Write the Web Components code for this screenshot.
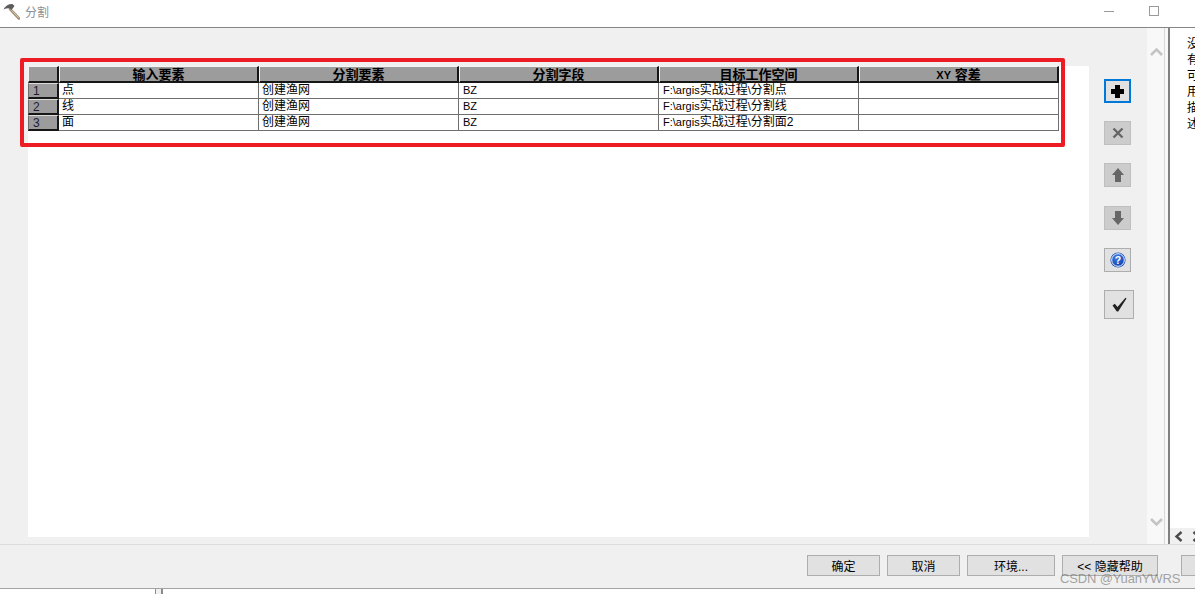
<!DOCTYPE html>
<html lang="zh">
<head>
<meta charset="utf-8">
<title>分割</title>
<style>
  html, body { margin: 0; padding: 0; background: #fff; }
  body { font: 12px "Liberation Sans", "Noto Sans CJK SC", sans-serif; color: #000; }
</style>
</head>
<body>
<split-dialog></split-dialog>

<script>
const FONT = `"Liberation Sans", "Noto Sans CJK SC", sans-serif`;

class TitleBar extends HTMLElement {
  constructor() {
    super();
    this.attachShadow({ mode: "open" }).innerHTML = `
    <style>
      :host {
        display: flex;
        align-items: center;
        height: 22px;
        padding-bottom: 5px;
        flex: none;
        background: #fff;
        border-bottom: 1px solid #868686;
        font: 12px ${FONT};
        overflow: hidden;
      }
      svg.app { margin-left: 3px; flex: none; }
      .title { margin-left: 5px; color: #8b8f93; flex: 1; }
      .min { width: 10px; height: 1px; background: #9a9a9a; margin-right: 35px; }
      .max { width: 8px; height: 8px; border: 1px solid #9a9a9a; margin-right: 36px; }
    </style>
    <svg class="app" width="17" height="20" viewBox="0 0 17 20">
      <path d="M7 8 L16 17.5" stroke="#a08f72" stroke-width="2.6" stroke-linecap="round"/>
      <path d="M7.6 8.2 L15.6 16.8" stroke="#d8d0bd" stroke-width="0.9"/>
      <path d="M0.5 8.5 C2 5 5 3 9.5 3 L11.5 5 L8.5 9 L6.5 7.2 C4.5 7 2.5 7.5 0.5 8.5 Z" fill="#5c5c5c"/>
    </svg>
    <span class="title"><slot></slot></span>
    <span class="min"></span>
    <span class="max"></span>
    `;
  }
}
customElements.define("title-bar", TitleBar);

class DataGrid extends HTMLElement {
  constructor() {
    super();
    this.attachShadow({ mode: "open" });
  }
  set data(data) {
    this._data = data;
    this.render();
  }
  render() {
    const head = ["", ...this._data.columns]
      .map(c => `<div class="hd">${c}</div>`).join("");
    const rows = this._data.rows.map((row, i) => `
      <div class="hd num">${i + 1}</div>
      ${row.map(c => `<div class="cell">${c}</div>`).join("")}
    `).join("");
    this.shadowRoot.innerHTML = `
    <style>
      :host {
        display: grid;
        grid-template-columns: 31px repeat(5, 200px);
        grid-template-rows: 17px repeat(3, 16px);
        width: 1031px;
        font: 12px ${FONT};
        color: #000;
      }
      .hd {
        box-sizing: border-box;
        background: #9c9c9c;
        border: 1px solid;
        border-color: #f4f4f4 #161616 #161616 #f4f4f4;
        border-right-width: 2px;
        border-bottom-width: 2px;
        text-align: center;
        font-weight: bold;
        font-size: 13px;
        line-height: 15px;
        overflow: hidden;
        white-space: nowrap;
      }
      .hd.num {
        text-align: left;
        padding-left: 4px;
        font-weight: normal;
        font-size: 12px;
        line-height: 14px;
        color: #1a1a30;
        border-left-color: #6e6e6e;
        border-top-color: #dcdcdc;
      }
      .cell {
        box-sizing: border-box;
        background: #fff;
        border-right: 1px solid #6f6f6f;
        border-bottom: 1px solid #6f6f6f;
        padding-left: 3px;
        line-height: 15px;
        overflow: hidden;
        white-space: nowrap;
      }
      .lat { font-size: 11px; }
      .cell .lat:first-child { margin-left: 1px; }
    </style>
    ${head}${rows}
    `;
  }
}
customElements.define("data-grid", DataGrid);

class HighlightFrame extends HTMLElement {
  constructor() {
    super();
    this.attachShadow({ mode: "open" }).innerHTML = `
    <style>
      :host {
        position: absolute;
        left: -8px;
        top: -8px;
        width: 1045px;
        height: 89px;
        box-sizing: border-box;
        border: 4px solid #ed1c24;
        border-radius: 2px;
        pointer-events: none;
      }
    </style>
    `;
  }
}
customElements.define("highlight-frame", HighlightFrame);

class ToolButton extends HTMLElement {
  constructor() {
    super();
    this.attachShadow({ mode: "open" }).innerHTML = `
    <style>
      :host {
        display: flex;
        align-items: center;
        justify-content: center;
        box-sizing: border-box;
        width: 27px;
        height: 24px;
        background: #e1e1e1;
        border: 1px solid #adadad;
      }
      :host([focused]) { border: 2px solid #0078d7; }
      :host([disabled]) { background: #cccccc; border-color: #bfbfbf; }
      :host([large]) { width: 30px; height: 29px; }
      svg { display: block; }
    </style>
    <slot></slot>
    `;
  }
}
customElements.define("tool-button", ToolButton);

class DialogButton extends HTMLElement {
  constructor() {
    super();
    this.attachShadow({ mode: "open" }).innerHTML = `
    <style>
      :host {
        display: flex;
        align-items: center;
        justify-content: center;
        box-sizing: border-box;
        flex: none;
        width: 73px;
        height: 21px;
        background: #e1e1e1;
        border: 1px solid #adadad;
        font: 12px ${FONT};
        color: #000;
        white-space: nowrap;
      }
    </style>
    <slot></slot>
    `;
  }
}
customElements.define("dialog-button", DialogButton);

class ScrollTrack extends HTMLElement {
  constructor() {
    super();
    this.attachShadow({ mode: "open" }).innerHTML = `
    <style>
      :host {
        display: flex;
        flex-direction: column;
        justify-content: space-between;
        align-items: center;
        box-sizing: border-box;
        flex: none;
        width: 18px;
        padding: 19px 0 17px;
        background: #f8f8f8;
      }
      svg { display: block; }
    </style>
    <svg width="13" height="9" viewBox="0 0 13 9"><path d="M1 8 L6.5 2.5 L12 8" fill="none" stroke="#c4c4c4" stroke-width="2.6"/></svg>
    <svg width="13" height="9" viewBox="0 0 13 9"><path d="M1 1 L6.5 6.5 L12 1" fill="none" stroke="#c4c4c4" stroke-width="2.6"/></svg>
    `;
  }
}
customElements.define("scroll-track", ScrollTrack);

class HelpPane extends HTMLElement {
  constructor() {
    super();
    this.attachShadow({ mode: "open" }).innerHTML = `
    <style>
      :host {
        display: flex;
        flex-direction: column;
        flex: none;
        box-sizing: border-box;
        width: 31px;
        margin-left: -1px;
        border-left: 1px solid #d8d8d8;
        background: #f8f8f8;
        overflow: hidden;
      }
      .inner {
        flex: 1;
        display: flex;
        flex-direction: column;
        min-height: 0;
        margin-left: 3px;
        border-left: 2px solid #808080;
        background: #fff;
      }
      .text {
        flex: 1;
        box-sizing: border-box;
        width: 12px;
        margin-left: 17px;
        padding-top: 8px;
        font: 12px/16px ${FONT};
        word-break: break-all;
      }
      .hbar {
        flex: none;
        height: 16px;
        background: #f0f0f0;
        display: flex;
        align-items: center;
        gap: 9px;
        padding-left: 4px;
      }
      svg { display: block; flex: none; }
    </style>
    <div class="inner">
      <div class="text"><slot></slot></div>
      <div class="hbar">
        <svg width="9" height="11" viewBox="0 0 9 11"><path d="M7.5 1 L2.5 5.5 L7.5 10" fill="none" stroke="#4a4a4a" stroke-width="2.4"/></svg>
        <svg width="9" height="11" viewBox="0 0 9 11"><path d="M1.5 1 L6.5 5.5 L1.5 10" fill="none" stroke="#4a4a4a" stroke-width="2.4"/></svg>
      </div>
    </div>
    `;
  }
}
customElements.define("help-pane", HelpPane);

class SplitDialog extends HTMLElement {
  constructor() {
    super();
    this.attachShadow({ mode: "open" }).innerHTML = `
    <style>
      :host {
        display: flex;
        flex-direction: column;
        width: 1195px;
        height: 594px;
        overflow: hidden;
        background: #fff;
        position: relative;
        font: 12px ${FONT};
      }
      .main { display: flex; height: 516px; background: #f0f0f0; flex: none; }
      .form { flex: 1; display: flex; padding: 38px 0 7px 28px; min-width: 0; }
      .sheet { position: relative; flex: none; width: 1061px; background: #fff; }
      .tools {
        display: flex;
        flex-direction: column;
        align-items: flex-start;
        gap: 18px;
        padding: 13px 0 0 15px;
      }
      .footer {
        flex: none;
        box-sizing: border-box;
        height: 45px;
        display: flex;
        align-items: flex-start;
        gap: 7px;
        padding: 10px 0 0 807px;
        background: #f0f0f0;
        border-top: 1px solid #dcdcdc;
        border-bottom: 1px solid #a3a3a3;
        overflow: hidden;
      }
      .stub {
        box-sizing: content-box;
        width: 5px;
        height: 5px;
        margin-left: 155px;
        background: #f0f0f0;
        border: solid #8c8c8c;
        border-width: 0 2px 0 1px;
      }
      .watermark {
        position: absolute;
        left: 1060px;
        top: 571px;
        font-size: 13px;
        line-height: 16px;
        letter-spacing: -.15px;
        color: rgba(110, 110, 110, .62);
        white-space: nowrap;
      }
    </style>
    <title-bar>分割</title-bar>
    <div class="main">
      <div class="form">
        <div class="sheet">
          <data-grid id="grid"></data-grid>
          <highlight-frame></highlight-frame>
        </div>
        <div class="tools">
          <tool-button focused>
            <svg width="15" height="15" viewBox="0 0 15 15"><path d="M5 1h5v4h4v5h-4v4h-5v-4h-4v-5h4z" fill="#000"/></svg>
          </tool-button>
          <tool-button disabled>
            <svg width="12" height="12" viewBox="0 0 12 12"><path d="M1.5 1.5 L10.5 10.5 M10.5 1.5 L1.5 10.5" stroke="#666" stroke-width="2.4"/></svg>
          </tool-button>
          <tool-button disabled>
            <svg width="14" height="16" viewBox="0 0 14 16"><path d="M7 1 L13 8 H10 V15 H4 V8 H1 Z" fill="#666"/></svg>
          </tool-button>
          <tool-button disabled style="margin-top:1px">
            <svg width="14" height="16" viewBox="0 0 14 16"><path d="M7 15 L13 8 H10 V1 H4 V8 H1 Z" fill="#666"/></svg>
          </tool-button>
          <tool-button>
            <svg width="16" height="16" viewBox="0 0 16 16">
              <defs><radialGradient id="q" cx=".4" cy=".3" r=".8"><stop offset="0" stop-color="#3f7fe8"/><stop offset="1" stop-color="#0b3aa6"/></radialGradient></defs>
              <circle cx="8" cy="8" r="7.6" fill="#1f57b8"/>
              <circle cx="8" cy="8" r="6.3" fill="url(#q)" stroke="#eef4ff" stroke-width="1"/>
              <text x="8" y="11.8" text-anchor="middle" font-family="Liberation Sans" font-weight="bold" font-size="10.5" fill="#fff">?</text>
            </svg>
          </tool-button>
          <tool-button large>
            <svg width="15" height="15" viewBox="0 0 15 15"><path d="M0.5 8.5 L2.8 6.8 L5.5 10 L13.5 0.8 L14.5 1.6 L6.2 14.5 L4.8 14.5 Z" fill="#222"/></svg>
          </tool-button>
        </div>
      </div>
      <scroll-track></scroll-track>
      <help-pane>没有可用描述</help-pane>
    </div>
    <div class="footer">
      <dialog-button>确定</dialog-button>
      <dialog-button>取消</dialog-button>
      <dialog-button style="width:88px">环境...</dialog-button>
      <dialog-button style="width:96px">&lt;&lt; 隐藏帮助</dialog-button>
      <dialog-button style="margin-left:16px"></dialog-button>
    </div>
    <div class="stub"></div>
    <span class="watermark">CSDN @YuanYWRS</span>
    `;
    const lat = s => `<span class="lat">${s}</span>`;
    const path = name => `${lat("F:\\argis")}实战过程${lat("\\")}${name}`;
    this.shadowRoot.getElementById("grid").data = {
      columns: ["输入要素", "分割要素", "分割字段", "目标工作空间", `${lat("XY")} 容差`],
      rows: [
        ["点", "创建渔网", lat("BZ"), path("分割点"), ""],
        ["线", "创建渔网", lat("BZ"), path("分割线"), ""],
        ["面", "创建渔网", lat("BZ"), path("分割面2"), ""]
      ]
    };
  }
}
customElements.define("split-dialog", SplitDialog);
</script>
</body>
</html>
